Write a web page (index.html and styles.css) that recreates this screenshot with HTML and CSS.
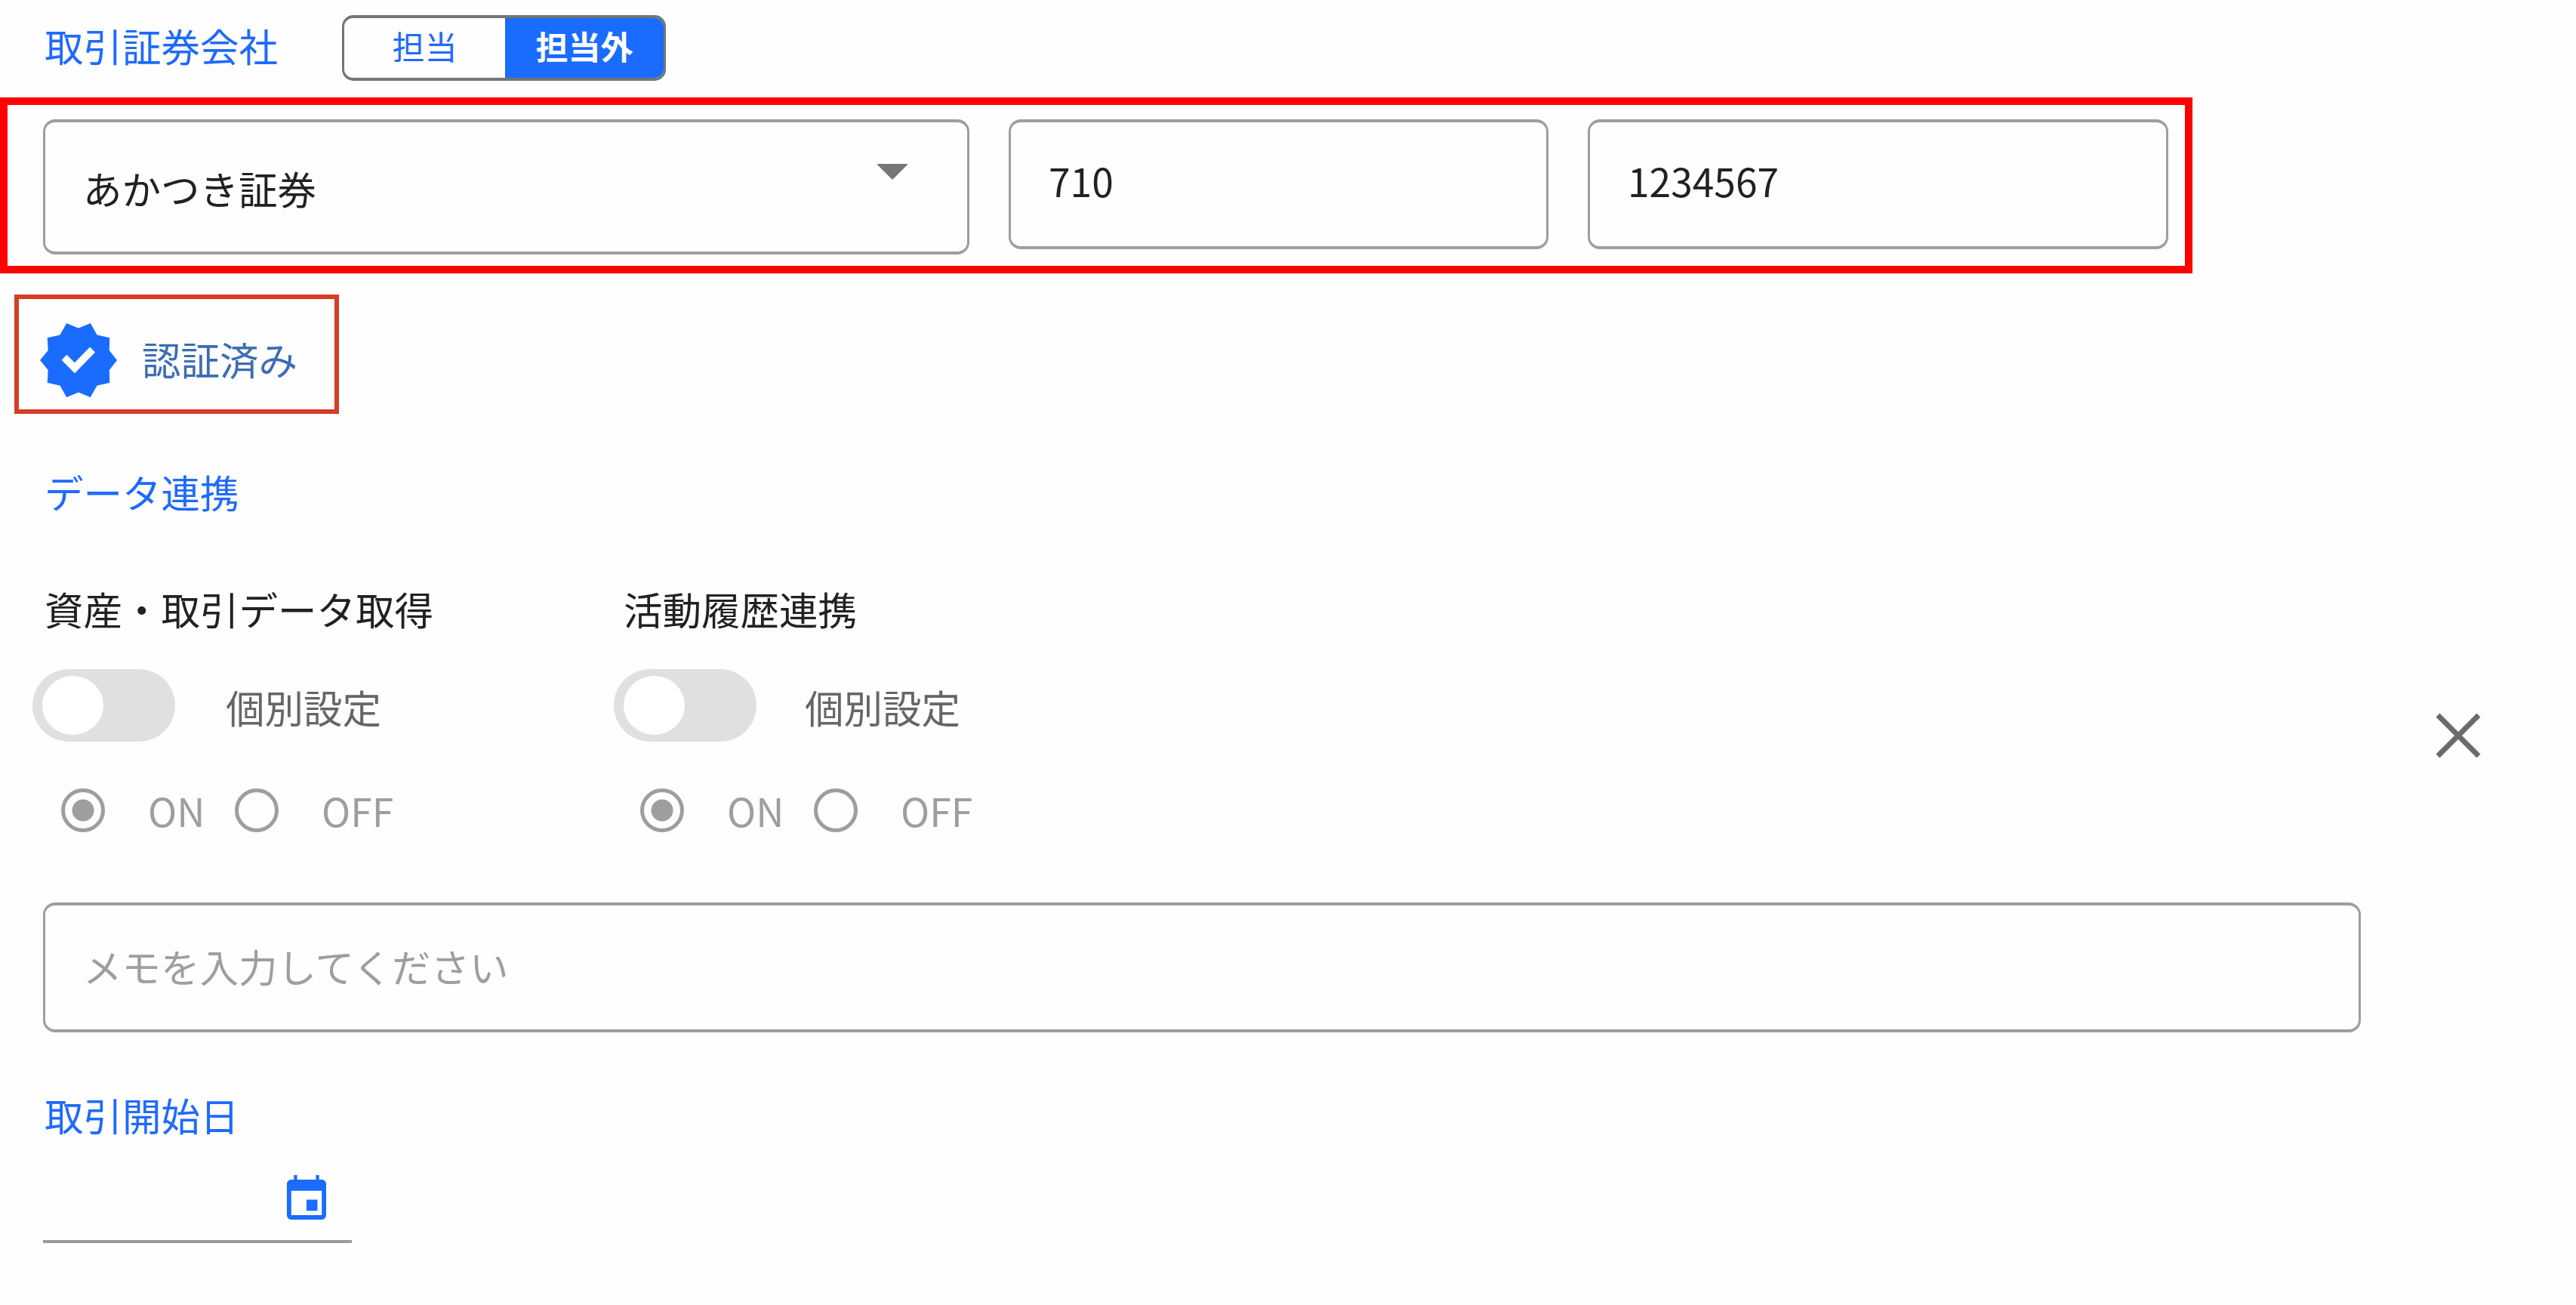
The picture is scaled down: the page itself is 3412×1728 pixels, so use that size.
FILE: index.html
```html
<!DOCTYPE html>
<html lang="ja">
<head>
<meta charset="utf-8">
<title>取引証券会社</title>
<link rel="stylesheet" href="styles.css">
</head>
<body>
<main class="form">
  <header class="head">
    <h2 class="title">取引証券会社</h2>
    <div class="segments">
      <span class="segment">担当</span>
      <span class="segment active">担当外</span>
    </div>
  </header>
  <section class="account">
    <div class="field company"><span>あかつき証券</span>
      <svg class="caret" viewBox="0 0 42 21"><path d="M0 0h42L21 21z"/></svg>
    </div>
    <div class="field branch">710</div>
    <div class="field number">1234567</div>
  </section>
  <div class="verified">
    <svg class="badge" viewBox="1 1.5 22 21" preserveAspectRatio="none">
      <path class="seal" d="M23 12L20.8 9.2 20.9 5.6 17.3 4.8 15.4 1.5 12 2.9 8.6 1.5 6.7 4.8 3.1 5.6 3.3 9.2 1 12 3.3 14.8 3.1 18.4 6.7 19.2 8.6 22.5 12 21.1 15.4 22.5 17.3 19.2 20.9 18.4 20.8 14.8z"/>
      <path class="check" d="M7.9 11.2L10.9 14.2 16 9"/>
    </svg>
    <span>認証済み</span>
  </div>
  <h2 class="title link-title">データ連携</h2>
  <section class="links">
    <div class="link">
      <h3 class="name">資産・取引データ取得</h3>
      <div class="switch-row"><span class="switch"><i class="knob"></i></span><span class="mode">個別設定</span></div>
      <div class="radios">
        <i class="radio checked"></i><span class="on">ON</span>
        <i class="radio"></i><span>OFF</span>
      </div>
    </div>
    <div class="link">
      <h3 class="name">活動履歴連携</h3>
      <div class="switch-row"><span class="switch"><i class="knob"></i></span><span class="mode">個別設定</span></div>
      <div class="radios">
        <i class="radio checked"></i><span class="on">ON</span>
        <i class="radio"></i><span>OFF</span>
      </div>
    </div>
    <svg class="close" viewBox="0 0 60 60"><path d="M3 3L57 57M57 3L3 57"/></svg>
  </section>
  <div class="field memo">メモを入力してください</div>
  <h2 class="title date-title">取引開始日</h2>
  <div class="date">
    <svg class="calendar" viewBox="3 1 18 20" preserveAspectRatio="none"><path d="M17 12h-5v5h5v-5zM16.3 1v2H7.7V1H6.2v2H5c-1.1 0-2 .9-2 2v14c0 1.1.9 2 2 2h14c1.1 0 2-.9 2-2V5c0-1.1-.9-2-2-2h-1.200V1h-1.500zm2.700 18H5V8h14v11z"/></svg>
  </div>
</main>
</body>
</html>
```
FILE: styles.css
```css
* { box-sizing: border-box; }
body {
  margin: 0;
  background: #fefefe;
  color: #212121;
  font: 400 51.5px/76px "Noto Sans CJK JP", sans-serif;
}
.form { display: flex; flex-direction: column; width: 3412px; height: 1728px; }
svg { display: block; flex: none; }
h2, h3 { margin: 0; font-size: inherit; font-weight: 400; }
.title { color: #1f6aff; padding-left: 59px; }

.head { display: flex; align-items: flex-start; height: 129px; padding-top: 20px; }
.head .title { width: 453px; padding-top: 2px; }
.segments {
  display: flex;
  width: 429px;
  height: 87px;
  border: solid #757575;
  border-width: 4px 3px;
  border-radius: 15px;
  overflow: hidden;
  color: #1f6aff;
  font-size: 43px;
  line-height: 73px;
  text-align: center;
}
.segment { width: 213px; }
.segment.active { width: 210px; background: #1a6cff; color: #fff; font-weight: 700; }

.account {
  display: flex;
  gap: 52px;
  width: 2904px;
  height: 233px;
  padding: 19px 0 0 47px;
  border: 10px solid #f00;
}
.field {
  height: 172px;
  border: solid #9e9e9e;
  border-width: 4px 3px;
  border-radius: 16px;
  padding: 39px 0 0 50px;
}
.company { display: flex; justify-content: space-between; width: 1227px; height: 179px; padding: 49px 78px 0 50px; }
.caret { width: 42px; height: 21px; margin-top: 6px; fill: #757575; }
.branch { width: 715px; }
.number { width: 769px; }

.verified {
  display: flex;
  gap: 33px;
  width: 430px;
  height: 158px;
  margin: 28px 0 0 19px;
  padding: 32px 0 0 28px;
  border: 6px solid #d63c26;
  color: #3d6db3;
  line-height: 76px;
}
.verified span { padding-top: 9px; }
.badge { width: 102px; height: 98px; }
.seal { fill: #1a6cff; }
.check { fill: none; stroke: #fff; stroke-width: 2.1; }

.link-title { margin-top: 65px; }

.links { display: flex; height: 427px; margin-top: 79px; }
.link { width: 767px; padding-left: 43px; }
.link + .link .switch { margin-left: 3px; }
.link + .link .mode { margin-left: -3px; }
.name { padding-left: 16px; }
.switch-row { display: flex; align-items: center; gap: 67px; height: 96px; margin-top: 42px; color: #666; }
.mode { padding-top: 3px; }
.switch { width: 189px; height: 96px; padding: 9px 13px; border-radius: 48px; background: #e0e0e0; }
.knob { display: block; width: 81px; height: 78px; border-radius: 50%; background: #fff; }
.radios { display: flex; align-items: center; height: 58px; margin-top: 62px; padding-left: 38px; color: #9e9e9e; }
.radio { width: 58px; height: 58px; margin-right: 57px; border: 5px solid #9e9e9e; border-radius: 50%; }
.radio.checked { background: radial-gradient(circle, #9e9e9e 14px, transparent 15px); }
.on { width: 115px; }
.close { width: 60px; height: 60px; margin: 176px 0 0 1692px; fill: none; stroke: #6b6b6b; stroke-width: 7; }

.memo { width: 3070px; margin-left: 57px; padding-top: 42px; color: #9e9e9e; }
.date-title { margin-top: 71px; }
.date { width: 409px; height: 132px; margin-left: 57px; padding: 42px 34px 0 323px; border-bottom: 4px solid #9a9a9a; }
.calendar { width: 52px; height: 59px; fill: #1a6cff; }
```
